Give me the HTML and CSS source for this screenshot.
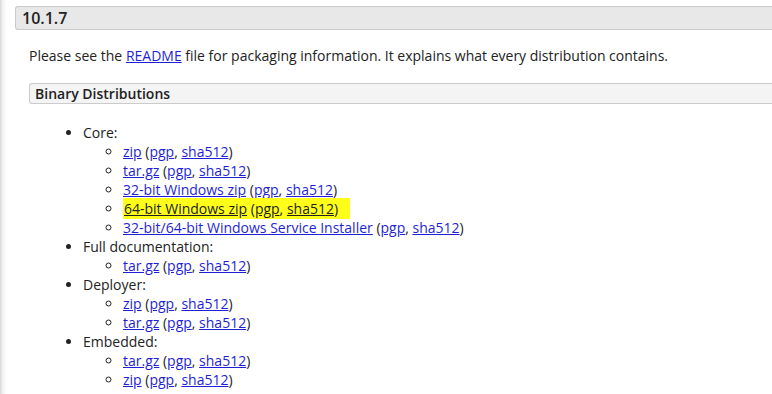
FILE: index.html
```html
<!DOCTYPE html>
<html lang="en">
<head>
  <meta charset="UTF-8">
  <title>Tomcat 10 Downloads</title>
  <link rel="stylesheet" href="styles.css">
</head>
<body>
  <div class="page">
    <div class="section">
      <h3 class="section-title">10.1.7</h3>
      <div class="section-body">
        <p>Please see the <a href="#">README</a> file for packaging information. It explains what every distribution contains.</p>

        <div class="subsection">
          <h4 class="subsection-title">Binary Distributions</h4>
          <ul class="dist">
            <li>Core:
              <ul>
                <li><a href="#">zip</a> (<a href="#">pgp</a>, <a href="#">sha512</a>)</li>
                <li><a href="#">tar.gz</a> (<a href="#">pgp</a>, <a href="#">sha512</a>)</li>
                <li><a href="#">32-bit Windows zip</a> (<a href="#">pgp</a>, <a href="#">sha512</a>)</li>
                <li><mark><a href="#">64-bit Windows zip</a> (<a href="#">pgp</a>, <a href="#">sha512</a>)</mark></li>
                <li><a href="#">32-bit/64-bit Windows Service Installer</a> (<a href="#">pgp</a>, <a href="#">sha512</a>)</li>
              </ul>
            </li>
            <li>Full documentation:
              <ul>
                <li><a href="#">tar.gz</a> (<a href="#">pgp</a>, <a href="#">sha512</a>)</li>
              </ul>
            </li>
            <li>Deployer:
              <ul>
                <li><a href="#">zip</a> (<a href="#">pgp</a>, <a href="#">sha512</a>)</li>
                <li><a href="#">tar.gz</a> (<a href="#">pgp</a>, <a href="#">sha512</a>)</li>
              </ul>
            </li>
            <li>Embedded:
              <ul>
                <li><a href="#">tar.gz</a> (<a href="#">pgp</a>, <a href="#">sha512</a>)</li>
                <li><a href="#">zip</a> (<a href="#">pgp</a>, <a href="#">sha512</a>)</li>
              </ul>
            </li>
          </ul>
        </div>
      </div>
    </div>
  </div>
</body>
</html>
```

FILE: styles.css
```css
body {
  margin: 0;
  font-family: "Open Sans", sans-serif;
  font-size: 14px;
  color: #222;
  background: #fff;
}

.page {
  min-height: 394px;
  padding: 6px 0 0 15px;
  background: linear-gradient(to right, #d8d8d8 0, #f4f4f4 3px, #fff 7px);
  background-repeat: no-repeat;
  background-size: 8px 100%;
  background-color: #fff;
}

a {
  color: #1f1fd6;
}

.section-title {
  margin: 0;
  height: 22px;
  line-height: 22px;
  padding: 0 6px;
  font-size: 16px;
  font-weight: 600;
  background: #e8e8e8;
  border: 1px solid #cbcbcb;
  border-right: none;
  border-radius: 3px 0 0 3px;
}

.section-body {
  padding-left: 14px;
}

.section-body p {
  margin: 16px 0 0;
  line-height: 19px;
}

.subsection {
  margin-top: 18px;
}

.subsection-title {
  margin: 0;
  height: 19px;
  line-height: 19px;
  padding: 0 5px;
  font-size: 14px;
  font-weight: 600;
  background: #f4f4f4;
  border: 1px solid #cbcbcb;
  border-right: none;
  border-radius: 3px 0 0 3px;
}

.dist {
  margin: 19px 0 0;
  padding-left: 54px;
  line-height: 19px;
}

.dist ul {
  margin: 0;
  padding-left: 40px;
  list-style-type: circle;
}

/* hand-drawn highlighter over the 64-bit zip line */
mark {
  background: #ffff1a;
  color: #222;
  padding: 1px 12px 1px 1px;
}

mark a {
  color: #222;
}
```
